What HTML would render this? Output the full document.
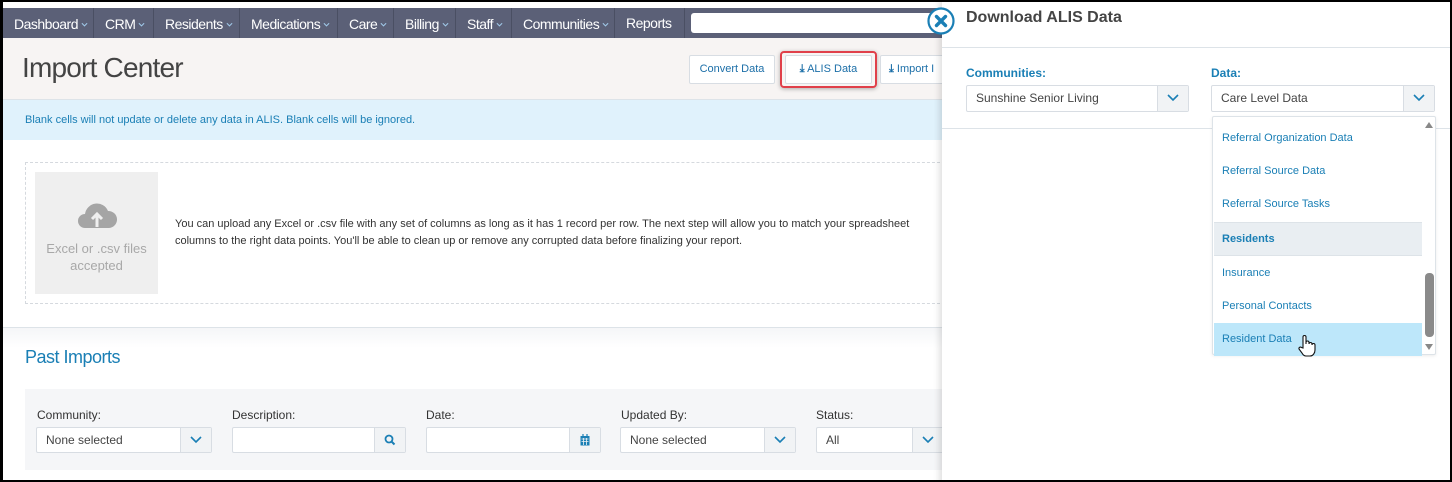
<!DOCTYPE html>
<html><head><style>
*{margin:0;padding:0;box-sizing:border-box}
body{width:1452px;height:482px;overflow:hidden;background:#000;font-family:"Liberation Sans",sans-serif;position:relative}
.a{position:absolute}
#page{left:3px;top:2px;width:1447px;height:478px;background:#fff;overflow:hidden}
.nav{left:0;top:6px;width:940px;height:30px;background:#5b6077}
.ni{position:absolute;top:0;height:30px;line-height:30px;color:#fff;font-size:14px;letter-spacing:-0.5px;border-right:1px solid #4a4f63;padding-left:11px}
.ni i{display:inline-block;width:7px;height:7px;margin-left:3px;vertical-align:1px}
.btn{position:absolute;top:53px;height:29px;border:1px solid #d8dde3;border-radius:2px;background:#fff;font-size:11px;color:#1c6fa8;line-height:27px;text-align:center}
.lbl{position:absolute;font-size:12px;color:#333}
.inp{position:absolute;height:26px;border:1px solid #d8dde3;border-radius:2px;background:#fff;font-size:12px;color:#444;line-height:24px;padding-left:9px}
.inp .b{position:absolute;right:0;top:0;width:31px;height:24px;border-left:1px solid #d8dde3;background:#f1f3f5;text-align:center}
.inp .b svg{margin-top:8px}
.dd{position:absolute;left:1px;width:208px;height:33px;line-height:33px;padding-left:8px;font-size:11px;color:#1a7fb5}
</style></head><body>
<svg width="0" height="0" style="position:absolute"><defs><symbol id="ch" viewBox="0 0 12 8"><path d="M1 1l5 5 5-5" stroke="#1a7fb5" stroke-width="1.6" fill="none"/></symbol><symbol id="cs" viewBox="0 0 8 6"><path d="M1 1l3 3 3-3" stroke="#9fc8e8" stroke-width="1.2" fill="none"/></symbol></defs></svg>
<div id="page" class="a">
<div class="a nav">
 <div class="ni" style="left:0;width:91px">Dashboard<i><svg width="7" height="6"><use href="#cs"/></svg></i></div>
 <div class="ni" style="left:91px;width:60px">CRM<i><svg width="7" height="6"><use href="#cs"/></svg></i></div>
 <div class="ni" style="left:151px;width:86px">Residents<i><svg width="7" height="6"><use href="#cs"/></svg></i></div>
 <div class="ni" style="left:237px;width:98px">Medications<i><svg width="7" height="6"><use href="#cs"/></svg></i></div>
 <div class="ni" style="left:335px;width:56px">Care<i><svg width="7" height="6"><use href="#cs"/></svg></i></div>
 <div class="ni" style="left:391px;width:62px">Billing<i><svg width="7" height="6"><use href="#cs"/></svg></i></div>
 <div class="ni" style="left:453px;width:56px">Staff<i><svg width="7" height="6"><use href="#cs"/></svg></i></div>
 <div class="ni" style="left:509px;width:103px">Communities<i><svg width="7" height="6"><use href="#cs"/></svg></i></div>
 <div class="ni" style="left:612px;width:70px">Reports</div>
 <div class="a" style="left:688px;top:5px;width:252px;height:20px;background:#fff;border-radius:3px"></div>
</div>
<div class="a" style="left:0;top:36px;width:940px;height:62px;background:#f7f4f3;border-bottom:1px solid #dde3e8"></div>
<div class="a" style="left:19px;top:50px;font-size:28px;color:#444;letter-spacing:-0.8px">Import Center</div>
<div class="btn" style="left:686px;width:86px">Convert Data</div>
<div class="a" style="left:777px;top:49px;width:97px;height:37px;border:2px solid #e0404a;border-radius:4px;box-shadow:0 1px 4px rgba(0,0,0,.3)"></div>
<div class="btn" style="left:782px;width:87px;top:53px"><b style="font-size:11px">⤓</b> ALIS Data</div>
<div class="btn" style="left:877px;width:70px;text-align:left;padding-left:8px"><b>⤓</b> Import I</div>
<div class="a" style="left:0;top:98px;width:940px;height:40px;background:#e0f2fc;font-size:11px;color:#1a7fb5;line-height:40px;padding-left:22px">Blank cells will not update or delete any data in ALIS. Blank cells will be ignored.</div>
<div class="a" style="left:22px;top:160px;width:930px;height:142px;border:1px dashed #d5d9de"></div>
<div class="a" style="left:32px;top:170px;width:123px;height:122px;background:#efefef;text-align:center;color:#a8a8a8;font-size:13px;line-height:17px">
 <svg width="40" height="34" viewBox="0 0 40 34" style="margin-top:26px"><path d="M8 30a7 7 0 0 1 0-14a12 12 0 0 1 23-3a8 8 0 0 1 1 17z" fill="#a5a5a5"/><path d="M20 29V17M15 21l5-5 5 5" stroke="#efefef" stroke-width="3" fill="none"/></svg>
 <div style="margin-top:4px">Excel or .csv files<br>accepted</div></div>
<div class="a" style="left:172px;top:214px;width:770px;font-size:11px;color:#333;line-height:17px">You can upload any Excel or .csv file with any set of columns as long as it has 1 record per row. The next step will allow you to match your spreadsheet columns to the right data points. You'll be able to clean up or remove any corrupted data before finalizing your report.</div>
<div class="a" style="left:0;top:325px;width:940px;height:1px;background:#dde3e8"></div>
<div class="a" style="left:0;top:326px;width:940px;height:20px;background:linear-gradient(#f5f6f8,#fff)"></div>
<div class="a" style="left:22px;top:345px;font-size:18px;color:#1a7fb5;letter-spacing:-0.5px">Past Imports</div>
<div class="a" style="left:22px;top:387px;width:920px;height:81px;background:#f5f6f8"></div>
<div class="lbl" style="left:34px;top:406px">Community:</div>
<div class="lbl" style="left:229px;top:406px">Description:</div>
<div class="lbl" style="left:423px;top:406px">Date:</div>
<div class="lbl" style="left:618px;top:406px">Updated By:</div>
<div class="lbl" style="left:813px;top:406px">Status:</div>
<div class="inp" style="left:33px;top:425px;width:176px">None selected<div class="b"><svg width="12" height="8"><use href="#ch"/></svg></div></div>
<div class="inp" style="left:229px;top:425px;width:174px"><div class="b"><svg width="12" height="12" viewBox="0 0 12 12" style="margin-top:6px"><circle cx="5" cy="5" r="3.5" stroke="#1a7fb5" stroke-width="1.8" fill="none"/><path d="M7.5 7.5l3 3" stroke="#1a7fb5" stroke-width="2"/></svg></div></div>
<div class="inp" style="left:423px;top:425px;width:175px"><div class="b"><svg width="10" height="12" viewBox="0 0 10 12" style="margin-top:6px"><rect x="0.5" y="2" width="9" height="9.5" fill="#1a7fb5"/><path d="M1.5 5h7M1.5 7.5h7M3.5 4v7M6.5 4v7" stroke="#f1f3f5" stroke-width="0.8"/><path d="M3 0v3M7 0v3" stroke="#1a7fb5" stroke-width="1.2"/></svg></div></div>
<div class="inp" style="left:617px;top:425px;width:176px">None selected<div class="b"><svg width="12" height="8"><use href="#ch"/></svg></div></div>
<div class="inp" style="left:813px;top:425px;width:140px">All<div class="b" style="right:12px"><svg width="12" height="8"><use href="#ch"/></svg></div></div>

<!-- panel -->
<div class="a" style="left:939px;top:-2px;width:520px;height:490px;background:#fff;box-shadow:-3px 0 6px rgba(0,0,0,.12)"></div>
<div class="a" style="left:939px;top:45px;width:510px;height:1px;background:#dde3e8"></div>
<div class="a" style="left:939px;top:126px;width:510px;height:1px;background:#dde3e8"></div>
<div class="a" style="left:963px;top:7px;font-size:16px;font-weight:bold;color:#444">Download ALIS Data</div>
<svg class="a" style="left:924px;top:5px" width="28" height="28" viewBox="0 0 28 28"><circle cx="14" cy="14" r="12.5" fill="#fff" stroke="#1a7fb5" stroke-width="2.2"/><path d="M9.5 9.5l9 9M18.5 9.5l-9 9" stroke="#1a7fb5" stroke-width="3.4" stroke-linecap="round"/></svg>
<div class="a" style="left:963px;top:64px;font-size:12px;font-weight:bold;color:#1a7fb5">Communities:</div>
<div class="a" style="left:1208px;top:64px;font-size:12px;font-weight:bold;color:#1a7fb5">Data:</div>
<div class="inp" style="left:963px;top:83px;width:223px;height:27px;line-height:25px;color:#444">Sunshine Senior Living<div class="b" style="height:25px"><svg width="12" height="8"><use href="#ch"/></svg></div></div>
<div class="inp" style="left:1208px;top:83px;width:224px;height:27px;line-height:25px;color:#444">Care Level Data<div class="b" style="height:25px"><svg width="12" height="8"><use href="#ch"/></svg></div></div>
<div class="a" style="left:1209px;top:114px;width:224px;height:239px;border:1px solid #dde3e8;background:#fff;border-radius:2px;box-shadow:0 1px 3px rgba(0,0,0,.08)">
 <div class="dd" style="top:5px">Referral Organization Data</div>
 <div class="dd" style="top:38px">Referral Source Data</div>
 <div class="dd" style="top:71px">Referral Source Tasks</div>
 <div class="dd" style="top:105px;height:34px;background:#e9eef2;font-weight:bold;border-top:1px solid #dde3e8;border-bottom:1px solid #dde3e8">Residents</div>
 <div class="dd" style="top:140px">Insurance</div>
 <div class="dd" style="top:173px">Personal Contacts</div>
 <div class="dd" style="top:206px;background:#bde7fa">Resident Data</div>
 <div class="a" style="left:212px;top:5px;width:0;height:0;border:4px solid transparent;border-bottom:6px solid #888;border-top:0"></div>
 <div class="a" style="left:212px;top:156px;width:9px;height:64px;background:#8a8a8a;border-radius:4px"></div>
 <div class="a" style="left:212px;top:227px;width:0;height:0;border:4px solid transparent;border-top:6px solid #888;border-bottom:0"></div>
</div>
<svg class="a" style="left:1295px;top:332px" width="18" height="24" viewBox="0 0 18 24"><path d="M5 14V3a1.5 1.5 0 0 1 3 0v7l0-1.5a1.5 1.5 0 0 1 3 0V10a1.5 1.5 0 0 1 3 0v1a1.5 1.5 0 0 1 3 0v5c0 3-2 6-5 6H8c-2 0-3-1-4-3l-3-4a1.5 1.5 0 0 1 2.5-1.5z" fill="#fff" stroke="#111" stroke-width="1.1"/></svg>
</div>
</body></html>
